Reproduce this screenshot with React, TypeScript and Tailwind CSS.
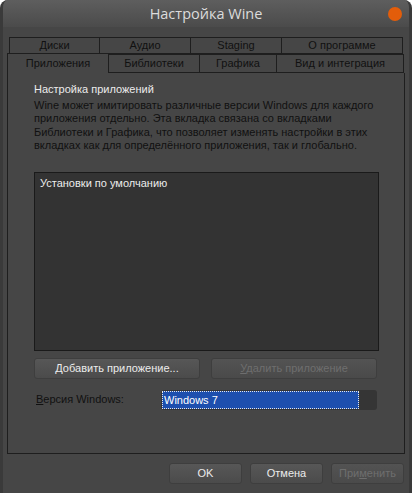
import React from "react";

const font = { fontFamily: '"Liberation Sans", "DejaVu Sans", sans-serif' };

export default function App() {
  return (
    <div className="w-[412px] h-[493px] bg-white" style={font}>
      <div className="w-[412px] h-[493px] rounded-t-[8px] bg-[#464646] border-x-[3px] border-[#3a3a3a] flex flex-col overflow-hidden">
        {/* Title bar */}
        <div className="h-[27px] shrink-0 relative flex items-center justify-center bg-gradient-to-b from-[#5e5e5e] to-[#4b4b4b]">
          <span className="text-[14.5px] text-[#dcdcdc]" style={{ fontFamily: '"Open Sans", "Noto Sans", sans-serif' }}>
            Настройка Wine
          </span>
          <div className="absolute left-[385px] top-[7px] w-[14px] h-[14px] rounded-full bg-[#e35d0a]" />
        </div>

        {/* Tabs */}
        <div className="mt-[10px] flex flex-col">
          <div className="flex ml-[6px] h-[17px] text-[11px] text-[#111]">
            <div className="w-[91px] border border-[#1e1e1e] flex items-center justify-center">Диски</div>
            <div className="w-[91px] border-y border-r border-[#1e1e1e] flex items-center justify-center">Аудио</div>
            <div className="w-[91px] border-y border-r border-[#1e1e1e] flex items-center justify-center">Staging</div>
            <div className="w-[121px] border-y border-r border-[#1e1e1e] flex items-center justify-center">О программе</div>
          </div>
          <div className="flex ml-[4px] h-[19px] text-[11px] text-[#111]">
            <div className="w-[102px] h-[20px] -mt-[1px] border-x border-t border-[#1e1e1e] bg-[#464646] flex items-center justify-center relative z-10">Приложения</div>
            <div className="w-[91px] border-y border-r border-[#1e1e1e] flex items-center justify-center">Библиотеки</div>
            <div className="w-[77px] border-y border-r border-[#1e1e1e] flex items-center justify-center">Графика</div>
            <div className="w-[127px] border-y border-r border-[#1e1e1e] flex items-center justify-center">Вид и интеграция</div>
          </div>
        </div>

        {/* Panel */}
        <div className="ml-[4px] w-[398px] h-[381px] border-x border-b border-[#1e1e1e] flex flex-col px-[26px] pt-[8px]">
          <div className="text-[11px] text-[#ececec] leading-[16px]">Настройка приложений</div>
          <p className="mt-[2px] text-[11px] leading-[13.4px] text-[#111] whitespace-nowrap">
            Wine может имитировать различные версии Windows для каждого
            <br />
            приложения отдельно. Эта вкладка связана со вкладками
            <br />
            Библиотеки и Графика, что позволяет изменять настройки в этих
            <br />
            вкладках как для определённого приложения, так и глобально.
          </p>
          <div className="mt-[19px] w-[345px] h-[179px] bg-[#333333] border border-[#1a1a1a] px-[5px] pt-[2px]">
            <div className="text-[11px] text-[#ececec] leading-[16px]">Установки по умолчанию</div>
          </div>
          <div className="mt-[7px] flex gap-[11px] w-[345px]">
            <button className="w-[166px] h-[21px] rounded-[3px] bg-gradient-to-b from-[#575757] to-[#4b4b4b] border border-[#3e3e3e] text-[11px] text-[#ececec] flex items-center justify-center">
              <span><u>Д</u>обавить приложение...</span>
            </button>
            <button className="w-[166px] h-[21px] rounded-[3px] bg-gradient-to-b from-[#535353] to-[#4a4a4a] border border-[#3e3e3e] text-[11px] text-[#6e6e6e] flex items-center justify-center">
              <span><u>У</u>далить приложение</span>
            </button>
          </div>
          <div className="mt-[11px] flex items-center w-[345px]">
            <div className="w-[127px] pl-[2px] text-[11px] text-[#111]"><u>В</u>ерсия Windows:</div>
            <div className="w-[216px] h-[20px] rounded-[3px] bg-[#353535] flex items-center">
              <div className="w-[197px] h-[18px] ml-[1px] bg-[#1d4fae] border border-dotted border-[#e8e8e8] text-[11px] text-white leading-[16px] pl-[1px]">
                Windows 7
              </div>
            </div>
          </div>
        </div>

        {/* Bottom buttons */}
        <div className="mt-[9px] flex justify-end gap-[8px] pr-[5px] text-[11px]">
          <button className="w-[73px] h-[21px] rounded-[3px] bg-gradient-to-b from-[#575757] to-[#4b4b4b] border border-[#3e3e3e] text-[#ececec]">OK</button>
          <button className="w-[73px] h-[21px] rounded-[3px] bg-gradient-to-b from-[#575757] to-[#4b4b4b] border border-[#3e3e3e] text-[#ececec]">Отмена</button>
          <button className="w-[73px] h-[21px] rounded-[3px] bg-gradient-to-b from-[#535353] to-[#4a4a4a] border border-[#3e3e3e] text-[#6e6e6e]">При<u>м</u>енить</button>
        </div>
      </div>
    </div>
  );
}
